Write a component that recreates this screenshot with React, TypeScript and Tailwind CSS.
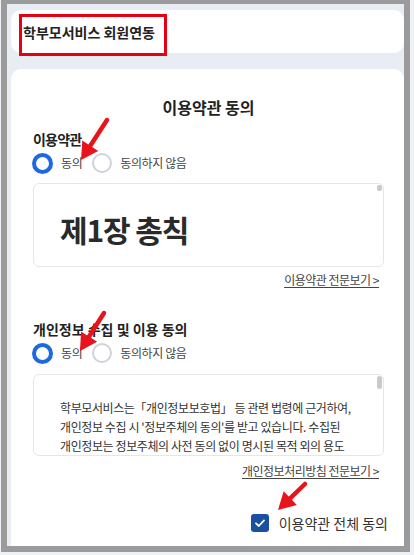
import React from "react";

function arrowPoly(tx: number, ty: number, sx: number, sy: number, len = 17, half = 9.5) {
  const dx = tx - sx;
  const dy = ty - sy;
  const l = Math.hypot(dx, dy);
  const ux = dx / l;
  const uy = dy / l;
  const bx = tx - ux * len;
  const by = ty - uy * len;
  const px = -uy;
  const py = ux;
  return {
    line: { x1: sx, y1: sy, x2: bx + ux * 2, y2: by + uy * 2 },
    pts: `${tx},${ty} ${bx + px * half},${by + py * half} ${bx - px * half},${by - py * half}`,
  };
}

function Arrow({ tx, ty, sx, sy }: { tx: number; ty: number; sx: number; sy: number }) {
  const a = arrowPoly(tx, ty, sx, sy);
  return (
    <g>
      <line {...a.line} stroke="#e8141c" strokeWidth={4.5} strokeLinecap="round" />
      <polygon points={a.pts} fill="#e8141c" />
    </g>
  );
}

function Radio({ checked, label }: { checked: boolean; label: string }) {
  return (
    <div className="flex items-center">
      {checked ? (
        <div className="w-[21px] h-[21px] rounded-full border-[4px] border-[#1d6ae0] bg-white" />
      ) : (
        <div className="w-[20px] h-[20px] rounded-full border-[2px] border-[#cfd3d9] bg-white" />
      )}
      <span className="ml-[8px] text-[12px] leading-[20px] tracking-[-0.4px] text-[#444]">{label}</span>
    </div>
  );
}

export default function App() {
  return (
    <div className="relative w-[414px] h-[555px] bg-[#eef1f5] pl-[1px] overflow-hidden font-['Noto_Sans_CJK_KR',sans-serif]">
      <div className="w-[409px] h-[552px] border-l-[6px] border-r-[6px] border-t-[4px] border-b-[6px] border-[#9b9b9b] bg-[#e8edf3] flex flex-col pl-[4px] pt-[6px] overflow-hidden">
        <div className="relative h-[43px] shrink-0 rounded-[10px] bg-white flex items-center pl-[12px]">
          <span className="text-[14px] font-bold leading-[20px] text-[#222]">학부모서비스 회원연동</span>
          <div className="absolute left-[8px] top-[4px] w-[148px] h-[42px] border-[3px] border-[#e60012]" />
        </div>

        <div className="mt-[16px] flex-1 bg-white rounded-t-[10px] pl-[22px] pr-[20px] pt-[27px] flex flex-col">
          <div className="text-center text-[16px] font-semibold leading-[22px] text-[#222]">이용약관 동의</div>

          <div className="mt-[11px] text-[14px] font-bold tracking-[-0.8px] leading-[20px] text-[#222]">이용약관</div>
          <div className="mt-[3px] flex items-center gap-[10px] h-[22px] -ml-[1px]">
            <Radio checked label="동의" />
            <Radio checked={false} label="동의하지 않음" />
          </div>

          <div className="relative mt-[9px] h-[84px] border border-[#e3e6ea] rounded-[6px] overflow-hidden pl-[26px] pt-[27px]">
            <div className="text-[30px] font-bold tracking-[-1.1px] leading-[36px] text-[#2a2a2a]">제1장 총칙</div>
            <div className="absolute right-[1px] top-[1px] w-[5px] h-[6px] rounded-[2px] bg-[#c9c9c9]" />
          </div>

          <div className="mt-[5px] flex justify-end pr-[5px]">
            <span className="text-[12px] leading-[16px] tracking-[-0.5px] text-[#444] underline underline-offset-2">이용약관 전문보기 &gt;</span>
          </div>

          <div className="mt-[31px] text-[14px] font-bold leading-[20px] text-[#222]">개인정보 수집 및 이용 동의</div>
          <div className="mt-[3px] flex items-center gap-[10px] h-[22px] -ml-[1px]">
            <Radio checked label="동의" />
            <Radio checked={false} label="동의하지 않음" />
          </div>

          <div className="relative mt-[10px] h-[82px] shrink-0 border border-[#e3e6ea] rounded-[6px] overflow-hidden pl-[26px] pt-[23px]">
            <div className="text-[12px] leading-[19px] tracking-[-0.4px] text-[#333] whitespace-nowrap">
              <div>학부모서비스는「개인정보보호법」 등 관련 법령에 근거하여,</div>
              <div>개인정보 수집 시 '정보주체의 동의'를 받고 있습니다. 수집된</div>
              <div>개인정보는 정보주체의 사전 동의 없이 명시된 목적 외의 용도</div>
            </div>
            <div className="absolute right-[1px] top-[1px] w-[5px] h-[13px] rounded-[3px] bg-[#c9c9c9]" />
          </div>

          <div className="mt-[7px] flex justify-end pr-[5px]">
            <span className="text-[12px] leading-[16px] tracking-[-0.5px] text-[#444] underline underline-offset-2">개인정보처리방침 전문보기 &gt;</span>
          </div>

          <div className="mt-[34px] flex justify-end items-center -mr-[4px]">
            <div className="w-[18px] h-[18px] rounded-[3px] bg-[#1b4f9f] flex items-center justify-center">
              <svg width="18" height="18" viewBox="0 0 18 18">
                <polyline points="5,9.3 7.8,12 13,6.4" fill="none" stroke="#fff" strokeWidth="1.8" strokeLinecap="round" strokeLinejoin="round" />
              </svg>
            </div>
            <span className="ml-[10px] text-[14px] leading-[20px] text-[#333]">이용약관 전체 동의</span>
          </div>
        </div>
      </div>

      <svg className="absolute inset-0 pointer-events-none" width="414" height="555" viewBox="0 0 414 555">
        <Arrow tx={81} ty={160} sx={107} sy={120} />
        <Arrow tx={80} ty={351} sx={104} sy={313} />
        <Arrow tx={278} ty={510} sx={305} sy={484} />
      </svg>
    </div>
  );
}
